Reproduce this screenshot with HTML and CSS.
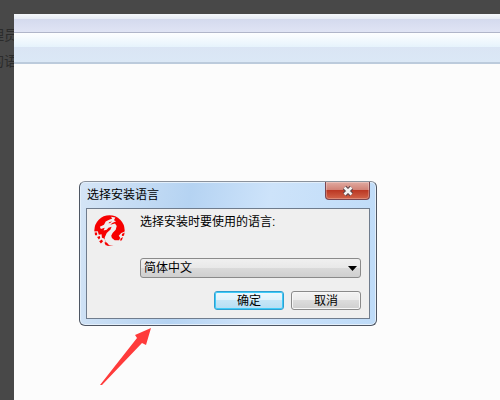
FILE: index.html
```
<!DOCTYPE html>
<html lang="zh-CN">
<head>
    <meta charset="utf-8">
    <title>选择安装语言</title>
    <link rel="stylesheet" href="styles.css">
</head>
<body>

<div class="desktop">
    <div class="behind">
        <p>理员</p>
        <p>的语</p>
    </div>
    <div class="window">
        <div class="titlebar"></div>
        <div class="toolbar"></div>
    </div>
</div>

<form class="dialog">
    <div class="caption">
        <h1>选择安装语言</h1>
        <button type="button" class="close" aria-label="关闭">
            <svg width="14" height="12" viewBox="0 0 14 12">
                <path d="M3.5 2.5 L10.5 9.5 M10.5 2.5 L3.5 9.5" stroke="#5b4549" stroke-width="4.6"/>
                <path d="M3.5 2.5 L10.5 9.5 M10.5 2.5 L3.5 9.5" stroke="#f4f4f4" stroke-width="2.6"/>
            </svg>
        </button>
    </div>
    <div class="client">
        <svg class="logo" width="31" height="31" viewBox="0 0 90 90">
            <circle cx="45" cy="45" r="44" fill="#f60000"/>
            <path fill="#efefef" d="M17 34 L29 28 L34 19 L44 14 L53 10 L49 5 L62 7 L58 15 L64 18 L53 23 L47 28 L61 25 L66 32 L63 43 L54 52 L50 60 L52 67 L60 73 L73 73 L84 68 L74 83 L60 90 L42 87 L33 78 L31 65 L37 52 L48 42 L51 34 L42 37 L37 43 L28 45 L31 37 L20 41 Z"/>
            <path fill="#efefef" d="M0 48 L11 47 L14 57 L22 56 L23 66 L31 69 L33 80 L39 90 L0 90 Z M79 52 L90 48 L90 70 L80 78 L73 73 L76 66 L72 60 Z"/>
            <path fill="#f60000" d="M2 51 L9 51 L9 59 L3 59 Z M9 64 L17 61 L18 67 L14 71 Z M15 76 L23 71 L26 77 L20 83 Z M30 80 L37 80 L45 89 L34 88 Z M81 55 L89 51 L87 60 L81 61 Z M77 68 L84 64 L81 73 L76 75 Z M43 22 L52 18 L49 22 L43 25 Z"/>
        </svg>
        <div class="fields">
            <label for="language">选择安装时要使用的语言:</label>
            <div class="combo">
                <select id="language">
                    <option>简体中文</option>
                </select>
                <svg class="drop" width="9" height="5" viewBox="0 0 9 5"><path d="M0 0 H9 L4.5 5 Z"/></svg>
            </div>
            <div class="actions">
                <button type="button" class="default">确定</button>
                <button type="button">取消</button>
            </div>
        </div>
    </div>
</form>

<svg class="pointer" width="52" height="60" viewBox="0 0 52 60">
    <path fill="#ff3b3b" d="M51 1 L46 18 L42 16 L2 58 L0 58 L37 11 L35 8 Z"/>
</svg>

</body>
</html>
```
FILE: styles.css
```
body {
    margin: 0;
    background: #484848;
    font-family: "Liberation Sans", "Noto Sans CJK SC", sans-serif;
    font-size: 12px;
    color: #000;
}

.desktop {
    display: flex;
    box-sizing: border-box;
    height: 100vh;
    padding-top: 14px;
}

/* page under the dimmed layer */
.behind {
    display: flex;
    flex-direction: column;
    align-items: flex-end;
    gap: 6px;
    box-sizing: border-box;
    width: 14px;
    padding-top: 11px;
    color: #2b2b2b;
    font-size: 14px;
    line-height: 20px;
    white-space: nowrap;
}

.behind p {
    margin: 0 -4px 0 0;
}

.window {
    position: relative;
    flex: 1;
    background: #fcfcfc;
}

.titlebar {
    height: 18px;
    border-bottom: 1px solid #b0b5c9;
    background: linear-gradient(#f5f8fb, #e6ebf5 5px, #d4daee 5px, #e0e4f4);
}

.toolbar {
    height: 29px;
    border-bottom: 2px solid #bccbdc;
    background: linear-gradient(#fdfeff, #e6f3fc 14px, #dae5f4 14px, #dbe8f6);
}

.dialog {
    position: absolute;
    left: 79px;
    top: 181px;
    box-sizing: border-box;
    width: 298px;
    padding: 0 6px 6px;
    border: 1px solid #4e5663;
    border-top-color: #8b929c;
    border-radius: 6px;
    background: linear-gradient(100deg, #d5e5f6, #b5d3f2 35%, #cde3fa 60%, #bedbf8);
    box-shadow: inset 0 0 0 1px #e3effb;
}

.caption {
    display: flex;
    justify-content: space-between;
    align-items: flex-start;
    height: 26px;
}

.caption h1 {
    margin: 0;
    padding-left: 1px;
    font-size: 12px;
    font-weight: normal;
    line-height: 26px;
}

button {
    box-sizing: border-box;
    width: 70px;
    height: 19px;
    padding: 0;
    border: 1px solid #8a8a8a;
    border-radius: 3px;
    background: linear-gradient(#f3f3f3, #ebebeb 50%, #dcdcdc 50%, #cfcfcf);
    box-shadow: inset 0 0 0 1px #f7f7f7;
    color: #000;
    font: inherit;
    line-height: 16px;
}

.default {
    border-color: #2f9fd0;
    background: linear-gradient(#eef8fd, #dff2fb 50%, #c5e6f7 50%, #b5def4);
    box-shadow: inset 0 0 0 1px #3fcbf8;
}

.close {
    display: flex;
    justify-content: center;
    align-items: center;
    width: 45px;
    height: 18px;
    border-color: #7b4650;
    border-top: 0;
    border-radius: 0 0 4px 4px;
    background: linear-gradient(#e0aaa1, #d07f73 50%, #bb3824 50%, #d2644a);
    box-shadow: inset 0 0 0 1px rgba(255,255,255,0.25);
}

.client {
    display: flex;
    gap: 15px;
    padding: 6px 8px 8px 7px;
    border: 1px solid #6f7c8d;
    background: #efefef;
}

.logo {
    flex: none;
}

.fields {
    flex: 1;
    display: flex;
    flex-direction: column;
}

.fields label {
    line-height: 14px;
    margin-bottom: 29px;
}

.combo {
    position: relative;
}

.combo select {
    display: block;
    appearance: none;
    box-sizing: border-box;
    width: 100%;
    height: 20px;
    padding: 0 20px 0 3px;
    border: 1px solid #8a8a8a;
    border-radius: 3px;
    background: linear-gradient(#f0f0f0, #e8e8e8 50%, #dadada 50%, #cfcfcf);
    color: #000;
    font: inherit;
    line-height: 18px;
}

.drop {
    position: absolute;
    right: 4px;
    top: 8px;
    pointer-events: none;
}

.actions {
    display: flex;
    justify-content: flex-end;
    gap: 7px;
    padding-top: 13px;
}

.pointer {
    position: absolute;
    left: 100px;
    top: 327px;
}
```
